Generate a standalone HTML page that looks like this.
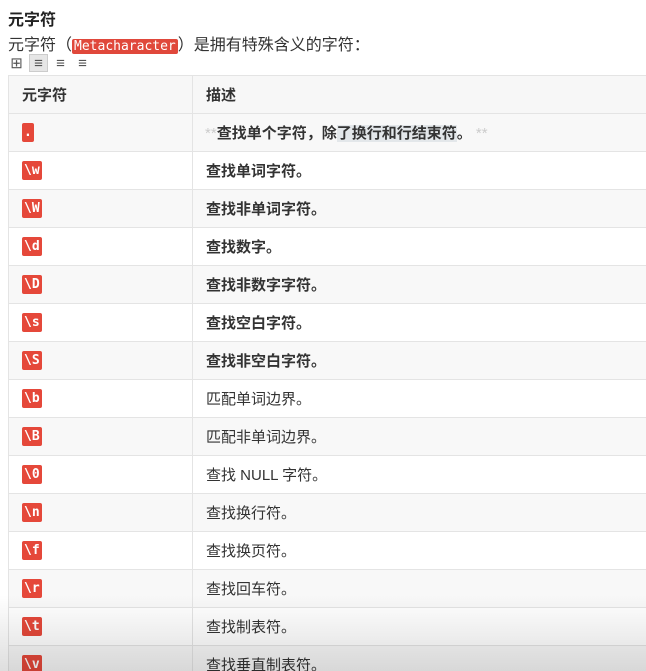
<!DOCTYPE html>
<html><head><meta charset="utf-8"><style>
html,body{margin:0;padding:0;background:#fff;width:646px;height:671px;overflow:hidden;position:relative}
body{font-family:"Liberation Sans","Noto Sans CJK SC",sans-serif;color:#333}
h1{position:absolute;left:8px;top:6px;margin:0;font-size:16px;font-weight:bold;color:#222}
.p{position:absolute;left:8px;top:32px;font-size:16px;color:#333;white-space:nowrap;font-family:"Noto Sans CJK SC",sans-serif;line-height:22px}
.p code{background:#e0483b;color:#fff;font-family:"DejaVu Sans Mono",monospace;font-size:13px;padding:0 2px;border-radius:2px}
.tb{position:absolute;left:7px;top:54px;height:18px;font-size:15px;color:#555}
.tb span{display:inline-block;width:19px;height:18px;text-align:center;line-height:18px;margin-right:3px}
.tb .a{background:#e6e6e6;border:1px solid #ccc;box-sizing:border-box}
table{position:absolute;left:8px;top:75px;border-collapse:collapse;width:660px}
td,th{border:1px solid #e4e4e4;height:37px;padding:0 0 0 13px;font-size:15px;text-align:left;vertical-align:middle}
th{background:#f7f7f7;font-weight:bold;color:#333}
td.c{width:170px}
tr:nth-child(even) td{background:#f8f8f8}
.b{display:inline-block;background:#e5483a;color:#fff;font-family:"DejaVu Sans Mono",monospace;font-weight:bold;font-size:13px;height:19px;line-height:19px;padding:0 2px;border-radius:2px;min-width:8px}
.bd{font-weight:bold;color:#333}
.g{color:#ccc;font-weight:normal}
.hl{background:#e3e7ea}
.ov{position:absolute;left:0;right:0;top:595px;bottom:0;background:linear-gradient(to bottom,rgba(0,0,0,0),rgba(0,0,0,0.13));pointer-events:none}
</style></head><body>
<h1>元字符</h1>
<div class="p">元字符（<code>Metacharacter</code>）是拥有特殊含义的字符：</div>
<div class="tb"><span>&#8862;</span><span class="a">&#8801;</span><span>&#8801;</span><span>&#8801;</span></div>
<table>
<tr><th style="width:170px">元字符</th><th>描述</th></tr>
<tr><td class="c"><span class="b">.</span></td><td class="bd" style="padding-left:12px"><span class="g">**</span>查找单个字符，除<span class="hl">了换行和行结束符</span>。 <span class="g">**</span></td></tr>
<tr><td class="c"><span class="b">\w</span></td><td class="bd">查找单词字符。</td></tr>
<tr><td class="c"><span class="b">\W</span></td><td class="bd">查找非单词字符。</td></tr>
<tr><td class="c"><span class="b">\d</span></td><td class="bd">查找数字。</td></tr>
<tr><td class="c"><span class="b">\D</span></td><td class="bd">查找非数字字符。</td></tr>
<tr><td class="c"><span class="b">\s</span></td><td class="bd">查找空白字符。</td></tr>
<tr><td class="c"><span class="b">\S</span></td><td class="bd">查找非空白字符。</td></tr>
<tr><td class="c"><span class="b">\b</span></td><td>匹配单词边界。</td></tr>
<tr><td class="c"><span class="b">\B</span></td><td>匹配非单词边界。</td></tr>
<tr><td class="c"><span class="b">\0</span></td><td>查找 NULL 字符。</td></tr>
<tr><td class="c"><span class="b">\n</span></td><td>查找换行符。</td></tr>
<tr><td class="c"><span class="b">\f</span></td><td>查找换页符。</td></tr>
<tr><td class="c"><span class="b">\r</span></td><td>查找回车符。</td></tr>
<tr><td class="c"><span class="b">\t</span></td><td>查找制表符。</td></tr>
<tr><td class="c"><span class="b">\v</span></td><td>查找垂直制表符。</td></tr>
</table>
<div class="ov"></div>
</body></html>
